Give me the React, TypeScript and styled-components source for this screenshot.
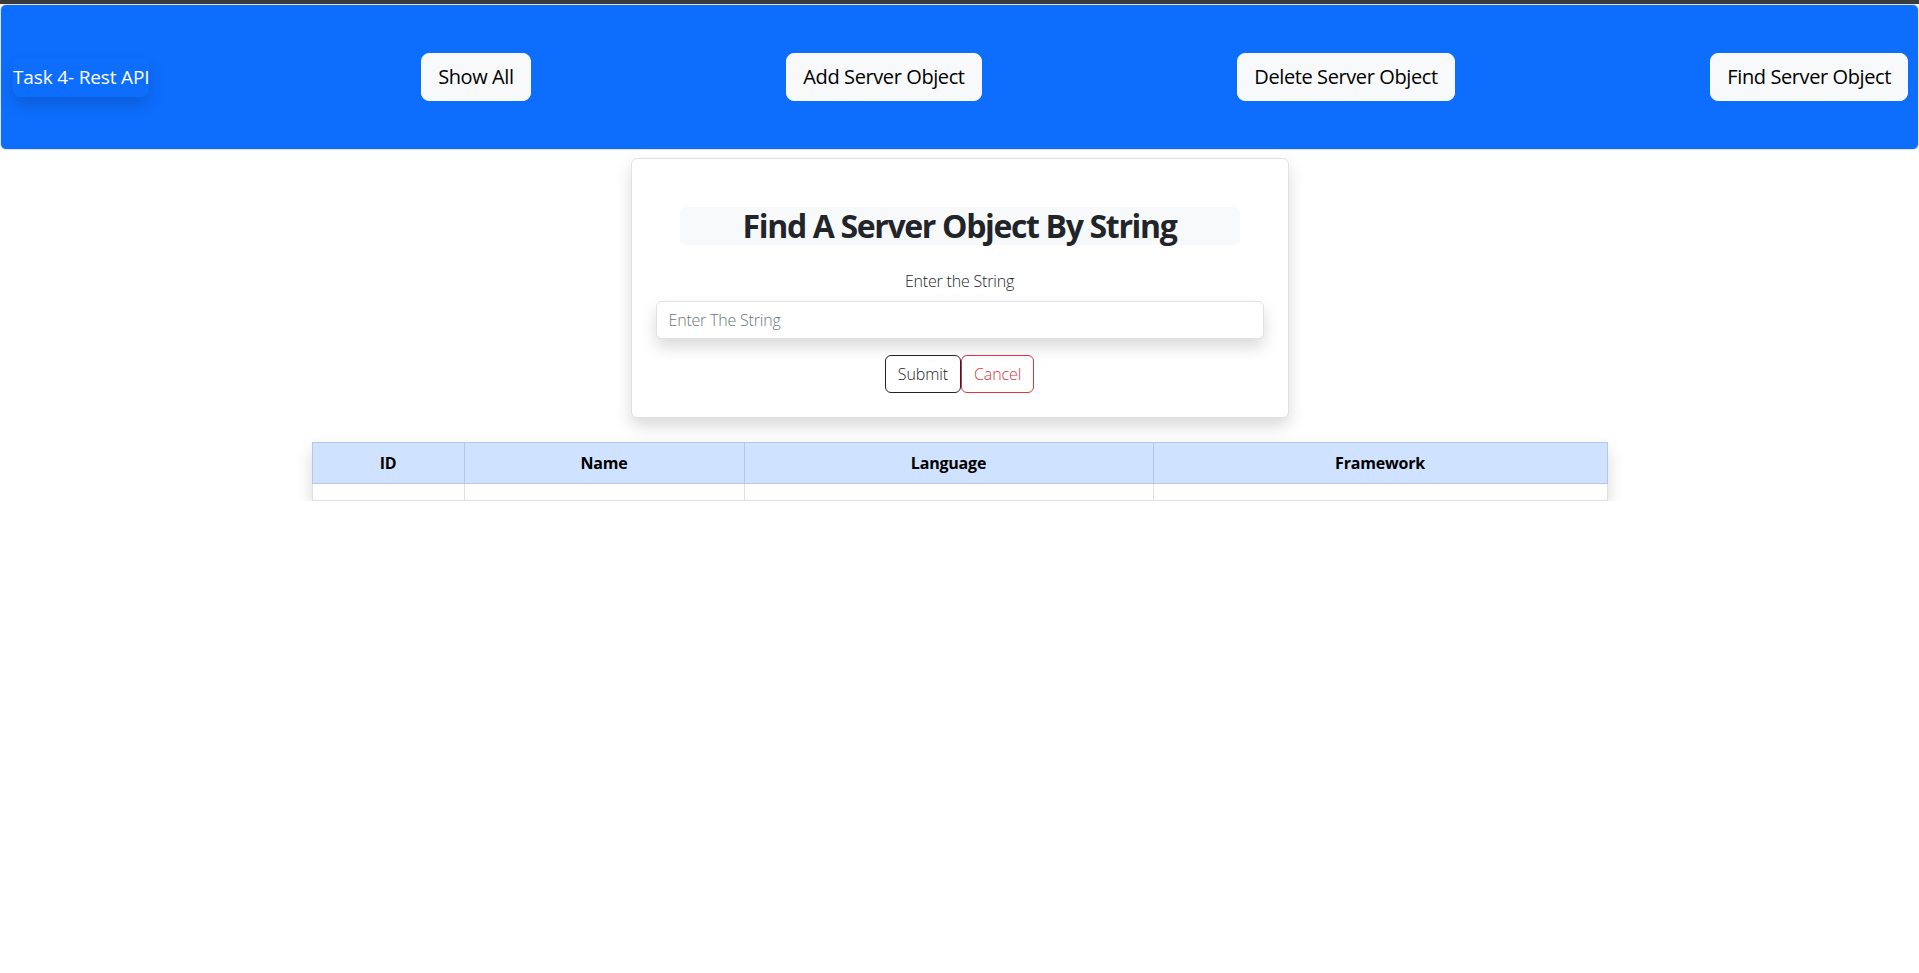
import React from "react";
import styled, { createGlobalStyle } from "styled-components";

const GlobalStyle = createGlobalStyle`
  * { box-sizing: border-box; }
  html, body { margin: 0; padding: 0; background: #ffffff; }
  body {
    font-family: "Open Sans", "Noto Sans", sans-serif;
    color: #212529;
  }
`;

const shadow = "0 0.5rem 1rem rgba(0, 0, 0, 0.15)";

const TopStrip = styled.div`
  height: 4px;
  background: #3b3b3b;
`;

const Navbar = styled.nav`
  display: flex;
  align-items: center;
  justify-content: space-between;
  height: 146px;
  padding: 0 10px 0 12px;
  background: #0d6efd;
  border: 1px solid #dee2e6;
  border-radius: 6px;
`;

const Brand = styled.span`
  color: #ffffff;
  font-size: 19px;
  line-height: 30px;
  padding: 5px 0;
  margin-right: 16px;
  border-radius: 8px;
  letter-spacing: -0.15px;
  box-shadow: ${shadow};
  white-space: nowrap;
`;

const NavButton = styled.button`
  font-family: inherit;
  font-size: 20px;
  line-height: 30px;
  letter-spacing: -0.4px;
  padding: 8px 16px;
  color: #000000;
  background: #f8f9fa;
  border: 1px solid #f8f9fa;
  border-radius: 8px;
  white-space: nowrap;
  cursor: pointer;
`;

const Card = styled.section`
  width: 658px;
  margin: 8px auto 0;
  padding: 24px;
  text-align: center;
  background: #ffffff;
  border: 1px solid #dee2e6;
  border-radius: 6px;
  box-shadow: ${shadow};
`;

const Heading = styled.h2`
  margin: 24px 24px 24px;
  font-size: 32px;
  font-weight: 700;
  line-height: 1.2;
  letter-spacing: -1.35px;
  color: #212529;
  background: #f8f9fa;
  border-radius: 6px;
`;

const Label = styled.label`
  display: block;
  margin-bottom: 8px;
  font-size: 16px;
  font-weight: 300;
  line-height: 24px;
  letter-spacing: -0.2px;
  color: #212529;
`;

const Input = styled.input`
  display: block;
  width: 100%;
  height: 38px;
  margin-bottom: 16px;
  padding: 6px 12px;
  font-family: inherit;
  font-size: 16px;
  font-weight: 300;
  line-height: 24px;
  letter-spacing: -0.2px;
  color: #212529;
  background: #ffffff;
  border: 1px solid #dee2e6;
  border-radius: 6px;
  box-shadow: ${shadow};
  outline: none;
  &::placeholder {
    color: #6c757d;
  }
`;

const ButtonRow = styled.div`
  display: flex;
  justify-content: center;
`;

const OutlineButton = styled.button<{ $tone: string }>`
  font-family: inherit;
  font-size: 16px;
  font-weight: 300;
  line-height: 24px;
  letter-spacing: -0.1px;
  padding: 6px 12px;
  color: ${(p) => p.$tone};
  background: transparent;
  border: 1px solid ${(p) => p.$tone};
  border-radius: 6px;
  cursor: pointer;
`;

const Table = styled.table`
  width: 1295px;
  margin: 24px auto 0;
  border-collapse: collapse;
  table-layout: fixed;
  box-shadow: ${shadow};
`;

const HeadCell = styled.th<{ $w: number }>`
  width: ${(p) => p.$w}px;
  padding: 8px;
  font-size: 16px;
  font-weight: 700;
  line-height: 24px;
  letter-spacing: -0.2px;
  color: #000000;
  text-align: center;
  background: #cfe2ff;
  border: 1px solid #b6c8e6;
`;

const BodyCell = styled.td`
  padding: 8px;
  height: 17px;
  background: #ffffff;
  border: 1px solid #dee2e6;
  border-top: none;
`;

const columns = [
  { label: "ID", width: 152 },
  { label: "Name", width: 280 },
  { label: "Language", width: 409 },
  { label: "Framework", width: 454 },
];

export default function App() {
  return (
    <>
      <GlobalStyle />
      <TopStrip />
      <Navbar>
        <Brand>Task 4- Rest API</Brand>
        <NavButton>Show All</NavButton>
        <NavButton>Add Server Object</NavButton>
        <NavButton>Delete Server Object</NavButton>
        <NavButton>Find Server Object</NavButton>
      </Navbar>
      <Card>
        <Heading>Find A Server Object By String</Heading>
        <Label htmlFor="search">Enter the String</Label>
        <Input id="search" placeholder="Enter The String" />
        <ButtonRow>
          <OutlineButton $tone="#212529">Submit</OutlineButton>
          <OutlineButton $tone="#dc3545">Cancel</OutlineButton>
        </ButtonRow>
      </Card>
      <Table>
        <thead>
          <tr>
            {columns.map((c) => (
              <HeadCell key={c.label} $w={c.width}>
                {c.label}
              </HeadCell>
            ))}
          </tr>
        </thead>
        <tbody>
          <tr>
            {columns.map((c) => (
              <BodyCell key={c.label} />
            ))}
          </tr>
        </tbody>
      </Table>
    </>
  );
}
